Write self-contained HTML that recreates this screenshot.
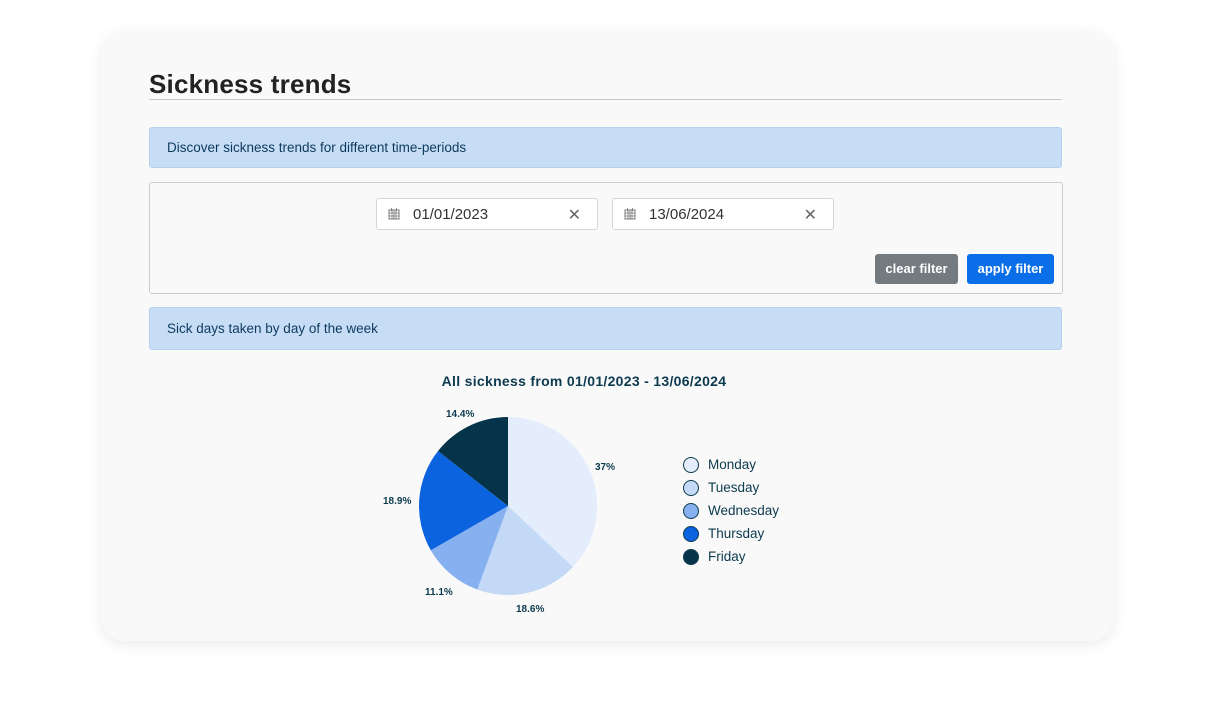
<!DOCTYPE html>
<html><head><style>
body{margin:0;width:1218px;height:706px;background:#fff;font-family:"Liberation Sans",sans-serif;position:relative;overflow:hidden}
.card{position:absolute;left:101px;top:30px;width:1013px;height:611px;background:#f9f9f9;border-radius:24px;box-shadow:0 4px 14px rgba(0,0,0,0.08)}
.abs{position:absolute}
h1{position:absolute;left:149px;top:69px;margin:0;font-size:26px;font-weight:bold;color:#222;letter-spacing:0.2px}
.line{left:149px;top:99px;width:913px;height:1px;background:#c8c8c8}
.alert{left:149px;width:913px;background:#c7ddf6;border:1px solid #b6d1f0;border-radius:3px;color:#0c3a5e;font-size:13.5px;box-sizing:border-box;padding-left:17px}
.box{left:149px;top:182px;width:914px;height:112px;border:1px solid #ccc;border-radius:3px;box-sizing:border-box}
.inp{top:198px;width:222px;height:32px;background:#fff;border:1px solid #d6d6d6;border-radius:3px;box-sizing:border-box;font-size:15px;color:#333}
.inp span{position:absolute;left:36px;top:7px}
.inp .x{position:absolute;left:auto;right:16px;top:6px;font-size:16px;color:#666}
.btn{top:254px;height:30px;border-radius:3px;color:#fff;font-size:13px;font-weight:bold;text-align:center;line-height:30px}
</style></head><body>
<div class="card"></div>
<h1>Sickness trends</h1>
<div class="abs line"></div>
<div class="abs alert" style="top:127px;height:41px;line-height:39px">Discover sickness trends for different time-periods</div>
<div class="abs box"></div>
<div class="abs inp" style="left:376px"><svg class="abs" style="left:11px;top:9px" width="12" height="12" viewBox="0 0 12 12"><rect x="1" y="2" width="10" height="9" fill="none" stroke="#777"/><path d="M1 5h10M1 8h10M4 2v9M6 2v9M8 2v9M3.5 0v3M8.5 0v3" stroke="#777" stroke-width="0.8"/></svg><span>01/01/2023</span><span class="x">✕</span></div>
<div class="abs inp" style="left:612px"><svg class="abs" style="left:11px;top:9px" width="12" height="12" viewBox="0 0 12 12"><rect x="1" y="2" width="10" height="9" fill="none" stroke="#777"/><path d="M1 5h10M1 8h10M4 2v9M6 2v9M8 2v9M3.5 0v3M8.5 0v3" stroke="#777" stroke-width="0.8"/></svg><span>13/06/2024</span><span class="x">✕</span></div>
<div class="abs btn" style="left:875px;width:83px;background:#737a80">clear filter</div>
<div class="abs btn" style="left:967px;width:87px;background:#0a6ee8">apply filter</div>
<div class="abs alert" style="top:307px;height:43px;line-height:41px">Sick days taken by day of the week</div>
<div class="abs" style="left:384px;top:373px;width:400px;text-align:center;font-size:14px;font-weight:bold;color:#0c3a4e;letter-spacing:0.3px">All sickness from 01/01/2023 - 13/06/2024</div>
<svg class="abs" style="left:0;top:0" width="1218" height="706">
<path d="M508 506L508 417A89 89 0 0 1 572.9 567Z" fill="#e3edfb"/>
<path d="M508 506L572.9 567A89 89 0 0 1 477.3 589.5Z" fill="#c3d9f6"/>
<path d="M508 506L477.3 589.5A89 89 0 0 1 430.8 550.2Z" fill="#86b0ef"/>
<path d="M508 506L430.8 550.2A89 89 0 0 1 438 451Z" fill="#0b63e0"/>
<path d="M508 506L438 451A89 89 0 0 1 508 417Z" fill="#05334a"/>
<g font-family="Liberation Sans" font-size="10" font-weight="bold" fill="#0c3a4e">
<text x="595" y="470">37%</text><text x="516" y="612">18.6%</text><text x="425" y="595">11.1%</text><text x="383" y="504">18.9%</text><text x="446" y="417">14.4%</text>
</g>
<g stroke="#0c3a4e" stroke-width="1">
<circle cx="691" cy="465" r="7.5" fill="#e3edfb"/><circle cx="691" cy="488" r="7.5" fill="#c3d9f6"/><circle cx="691" cy="511" r="7.5" fill="#86b0ef"/><circle cx="691" cy="534" r="7.5" fill="#0b63e0"/><circle cx="691" cy="557" r="7.5" fill="#05334a"/>
</g>
<g font-family="Liberation Sans" font-size="13.5" fill="#0c3a4e">
<text x="708" y="469">Monday</text><text x="708" y="492">Tuesday</text><text x="708" y="515">Wednesday</text><text x="708" y="538">Thursday</text><text x="708" y="561">Friday</text>
</g>
</svg>
</body></html>
